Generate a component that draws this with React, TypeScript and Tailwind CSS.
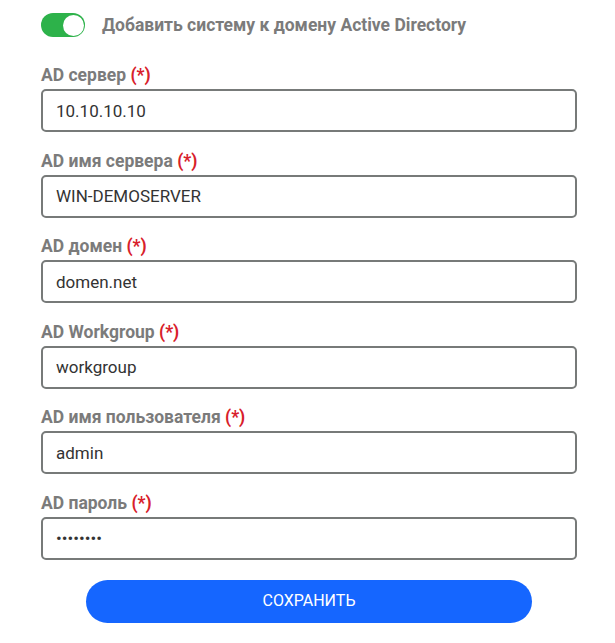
import React, { useState } from "react";

type Field = {
  label: string;
  value: string;
  type?: string;
};

const fields: Field[] = [
  { label: "AD сервер", value: "10.10.10.10" },
  { label: "AD имя сервера", value: "WIN-DEMOSERVER" },
  { label: "AD домен", value: "domen.net" },
  { label: "AD Workgroup", value: "workgroup" },
  { label: "AD имя пользователя", value: "admin" },
  { label: "AD пароль", value: "password", type: "password" },
];

const App = () => {
  const [enabled, setEnabled] = useState(true);
  const [values, setValues] = useState(fields.map((f) => f.value));

  return (
    <div className="min-h-screen bg-white font-['Roboto','Liberation_Sans',sans-serif]">
      <div className="w-[536px] ml-[41px] pt-[13px]">
        {/* переключатель */}
        <div className="flex items-center h-6">
          <button
            type="button"
            onClick={() => setEnabled((v) => !v)}
            className={`relative w-[44px] h-6 rounded-full ${
              enabled ? "bg-[#2db24a]" : "bg-gray-300"
            }`}
          >
            <span
              className={`absolute top-[1.5px] w-[21px] h-[21px] rounded-full bg-white ${
                enabled ? "left-[21.5px]" : "left-[1.5px]"
              }`}
            />
          </button>
          <span className="ml-[17px] text-[17.5px] font-bold text-[#7b7b7b]">
            Добавить систему к домену Active Directory
          </span>
        </div>

        {/* поля */}
        <div className="flex flex-col gap-[18.5px] mt-[28px]">
          {fields.map((f, i) => (
            <div key={f.label} className="flex flex-col">
              <label className="h-5 leading-5 text-[17.5px] font-bold text-[#7b7b7b] mb-1">
                {f.label} <span className="text-[#d8202a]">(*)</span>
              </label>
              <input
                type={f.type ?? "text"}
                value={values[i]}
                onChange={(e: React.ChangeEvent<HTMLInputElement>) =>
                  setValues((prev) =>
                    prev.map((v, j) => (j === i ? e.target.value : v))
                  )
                }
                className="h-[43px] w-full border-2 border-[#777a79] rounded-[5px] px-[13px] text-[17px] text-[#333] outline-none"
              />
            </div>
          ))}
        </div>

        <div className="flex justify-center mt-5">
          <button
            type="button"
            className="w-[446px] h-[43px] rounded-full bg-[#1566ff] text-white text-[16px]"
          >
            СОХРАНИТЬ
          </button>
        </div>
      </div>
    </div>
  );
};

export default App;
